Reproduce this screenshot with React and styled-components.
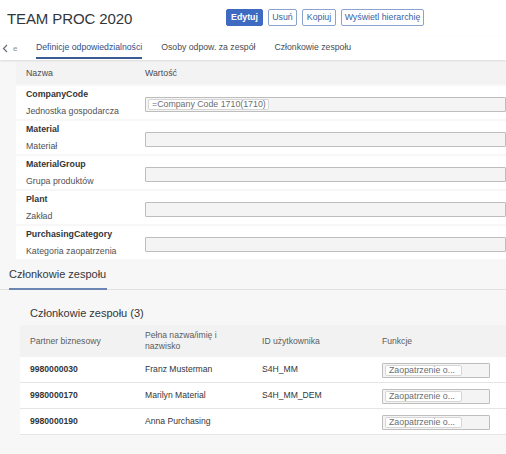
import React from "react";
import styled, { createGlobalStyle } from "styled-components";

const GlobalStyle = createGlobalStyle`
  html, body {
    margin: 0;
    padding: 0;
    background: #f7f7f7;
    font-family: "Liberation Sans", Arial, sans-serif;
    color: #32363a;
  }
  #root {
    width: 506px;
    height: 454px;
    overflow: hidden;
  }
`;

const Page = styled.div`
  width: 506px;
  min-height: 454px;
  background: #f7f7f7;
`;

const Header = styled.div`
  display: flex;
  align-items: center;
  height: 36px;
  padding: 0 0 0 7px;
  background: #ffffff;
`;

const Title = styled.h1`
  flex: 0 0 219px;
  margin: 0;
  font-size: 15px;
  font-weight: 400;
  color: #32363a;
  letter-spacing: -0.1px;
`;

const Actions = styled.div`
  display: flex;
  gap: 5px;
  margin-top: -2px;
`;

const Button = styled.button`
  height: 17px;
  padding: 0;
  border-radius: 2px;
  font-family: inherit;
  font-size: 8.8px;
  font-weight: ${(p) => (p.$primary ? 700 : 400)};
  line-height: 15px;
  white-space: nowrap;
  border: 1px solid ${(p) => (p.$primary ? "#3e6ac2" : "#8aa2d0")};
  background: ${(p) => (p.$primary ? "#3e6ac2" : "#ffffff")};
  color: ${(p) => (p.$primary ? "#ffffff" : "#3a5fa6")};
  width: ${(p) => p.$w}px;
`;

const TabBar = styled.div`
  display: flex;
  align-items: stretch;
  height: 24px;
  background: #ffffff;
  box-shadow: 0 1px 2px rgba(0, 0, 0, 0.12);
  position: relative;
  z-index: 1;
`;

const NavArrow = styled.div`
  display: flex;
  align-items: center;
  gap: 5px;
  width: 36px;
  padding-left: 2px;
  box-sizing: border-box;
  color: #8a8d90;
  font-size: 8px;
`;

const Tab = styled.div`
  display: flex;
  align-items: center;
  margin-right: 19px;
  padding-top: 1px;
  font-size: 8.7px;
  color: ${(p) => (p.$active ? "#2d4f8c" : "#4a4d50")};
  border-bottom: 2px solid ${(p) => (p.$active ? "#3b5b94" : "transparent")};
  margin-bottom: 1px;
  white-space: nowrap;
`;

const Attributes = styled.div`
  display: flex;
  flex-direction: column;
  gap: 2px;
  margin: 2px 0 0 16px;
`;

const AttrHead = styled.div`
  display: grid;
  grid-template-columns: 119px 1fr;
  height: 22px;
  align-items: center;
  padding-left: 10px;
  background: #f3f3f3;
  font-size: 8.8px;
  color: #4a4d50;
`;

const AttrRow = styled.div`
  display: grid;
  grid-template-columns: 119px 1fr;
  align-items: center;
  height: 33px;
  padding-left: 10px;
  background: #ffffff;
`;

const LabelBox = styled.div`
  display: flex;
  flex-direction: column;
  line-height: 17px;
  font-size: 8.8px;
  white-space: nowrap;
`;

const Key = styled.span`
  font-weight: 700;
  color: #32363a;
`;

const Sub = styled.span`
  color: #4f5255;
`;

const Field = styled.div`
  display: flex;
  align-items: center;
  height: 15px;
  margin-top: 2px;
  padding-left: 2px;
  background: #f4f4f4;
  border: 1px solid #bdbdbd;
  border-radius: 1px;
  width: ${(p) => (p.$w ? `${p.$w}px` : "auto")};
  box-sizing: border-box;
`;

const Token = styled.span`
  display: inline-flex;
  align-items: center;
  height: 11px;
  padding: 0 5px 0 3px;
  background: #ffffff;
  border: 1px solid #d6d6d6;
  border-radius: 2px;
  font-size: 8.8px;
  color: #6a6d70;
  width: ${(p) => (p.$w ? `${p.$w}px` : "auto")};
  box-sizing: border-box;
  white-space: nowrap;
`;

const SectionBar = styled.div`
  display: flex;
  height: 30px;
  border-bottom: 1px solid #e2e2e2;
`;

const SectionTab = styled.div`
  display: flex;
  align-items: center;
  margin-left: 9px;
  width: 98px;
  font-size: 11px;
  color: #32363a;
  border-bottom: 2px solid #6c86b3;
  margin-bottom: -1px;
  padding-top: 1px;
  white-space: nowrap;
`;

const Card = styled.div`
  margin-left: 20px;
`;

const CardTitle = styled.h2`
  margin: 0;
  padding: 13px 0 2px 10px;
  font-size: 11px;
  font-weight: 400;
  line-height: 20px;
  color: #32363a;
`;

const TableRow = styled.div`
  display: grid;
  grid-template-columns: 115px 117px 120px 1fr;
  align-items: center;
  height: ${(p) => (p.$head ? 32 : 25)}px;
  background: ${(p) => (p.$head ? "#f2f2f2" : "#ffffff")};
  border-bottom: ${(p) => (p.$head ? "none" : "1px solid #e5e5e5")};
  font-size: 8.6px;
  color: ${(p) => (p.$head ? "#5a5d60" : "#32363a")};
`;

const Cell = styled.div`
  padding-left: 10px;
  line-height: 11px;
  font-weight: ${(p) => (p.$bold ? 700 : 400)};
  white-space: ${(p) => (p.$wrap ? "normal" : "nowrap")};
`;

const attrs = [
  { key: "CompanyCode", sub: "Jednostka gospodarcza", token: "=Company Code 1710(1710)" },
  { key: "Material", sub: "Materiał" },
  { key: "MaterialGroup", sub: "Grupa produktów" },
  { key: "Plant", sub: "Zakład" },
  { key: "PurchasingCategory", sub: "Kategoria zaopatrzenia" },
];

const members = [
  { bp: "9980000030", name: "Franz Musterman", user: "S4H_MM" },
  { bp: "9980000170", name: "Marilyn Material", user: "S4H_MM_DEM" },
  { bp: "9980000190", name: "Anna Purchasing", user: "" },
];

const Chevron = () => (
  <svg width="6" height="9" viewBox="0 0 6 9">
    <path d="M5 1 L1.5 4.5 L5 8" fill="none" stroke="#6a6d70" strokeWidth="1.2" />
  </svg>
);

export default function App() {
  return (
    <Page>
      <GlobalStyle />
      <Header>
        <Title>TEAM PROC 2020</Title>
        <Actions>
          <Button $primary $w={37}>Edytuj</Button>
          <Button $w={29}>Usuń</Button>
          <Button $w={34}>Kopiuj</Button>
          <Button $w={83}>Wyświetl hierarchię</Button>
        </Actions>
      </Header>

      <TabBar>
        <NavArrow>
          <Chevron />
          <span>e</span>
        </NavArrow>
        <Tab $active>Definicje odpowiedzialności</Tab>
        <Tab>Osoby odpow. za zespół</Tab>
        <Tab>Członkowie zespołu</Tab>
      </TabBar>

      <Attributes>
        <AttrHead>
          <span>Nazwa</span>
          <span>Wartość</span>
        </AttrHead>
        {attrs.map((a) => (
          <AttrRow key={a.key}>
            <LabelBox>
              <Key>{a.key}</Key>
              <Sub>{a.sub}</Sub>
            </LabelBox>
            <Field>{a.token && <Token $w={121}>{a.token}</Token>}</Field>
          </AttrRow>
        ))}
      </Attributes>

      <SectionBar>
        <SectionTab>Członkowie zespołu</SectionTab>
      </SectionBar>

      <Card>
        <CardTitle>Członkowie zespołu (3)</CardTitle>
        <TableRow $head>
          <Cell>Partner biznesowy</Cell>
          <Cell $wrap>Pełna nazwa/imię i nazwisko</Cell>
          <Cell>ID użytkownika</Cell>
          <Cell>Funkcje</Cell>
        </TableRow>
        {members.map((m) => (
          <TableRow key={m.bp}>
            <Cell $bold>{m.bp}</Cell>
            <Cell>{m.name}</Cell>
            <Cell>{m.user}</Cell>
            <Cell>
              <Field $w={108}>
                <Token $w={77}>Zaopatrzenie o...</Token>
              </Field>
            </Cell>
          </TableRow>
        ))}
      </Card>
    </Page>
  );
}
